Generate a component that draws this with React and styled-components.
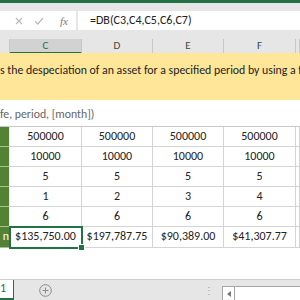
import React from 'react';
import styled, { createGlobalStyle } from 'styled-components';

const Global = createGlobalStyle`
  html, body { margin: 0; padding: 0; }
  body {
    width: 300px;
    height: 300px;
    overflow: hidden;
    font-family: Carlito, Lato, "Liberation Sans", sans-serif;
    background: #fff;
  }
`;

const COLS = '10px 72px 71px 71px 72px 1fr';

const Window = styled.div`
  width: 300px;
  height: 300px;
  display: flex;
  flex-direction: column;
  overflow: hidden;
`;

const TitleStrip = styled.div`
  height: 3px;
  background: #217346;
`;

const FormulaArea = styled.div`
  background: #e6e6e6;
  padding: 8px 0 9px;
  display: flex;
  gap: 2px;
`;

const ButtonsBox = styled.div`
  width: 76px;
  height: 19px;
  background: #fff;
  display: flex;
  align-items: center;
  color: #b5b5b5;
`;

const IconSlot = styled.div`
  width: ${p => p.$w}px;
  height: 19px;
  display: flex;
  align-items: center;
  justify-content: center;
`;

const Fx = styled.span`
  font-family: "Liberation Serif", serif;
  font-style: italic;
  font-size: 11px;
  color: #7a7a7a;
`;

const FormulaInput = styled.div`
  flex: 1;
  height: 19px;
  background: #fff;
  font-size: 12px;
  line-height: 19px;
  color: #222;
  padding-left: 12px;
  white-space: nowrap;
`;

const HeaderRow = styled.div`
  display: grid;
  grid-template-columns: ${COLS};
  height: 14px;
  background: #e6e6e6;
`;

const ColHead = styled.div`
  font-size: 11px;
  line-height: 13px;
  text-align: center;
  color: ${p => (p.$active ? '#217346' : '#444')};
  background: ${p => (p.$active ? '#d2d2d2' : '#e6e6e6')};
  border-right: 1px solid #c8c8c8;
  border-bottom: ${p => (p.$active ? '2px solid #217346' : '1px solid #c8c8c8')};
  box-sizing: border-box;
`;

const Banner = styled.div`
  height: 47px;
  background: #ffe699;
  font-size: 11.8px;
  line-height: 16px;
  padding-top: 9px;
  box-sizing: border-box;
  color: #222;
  white-space: nowrap;
  overflow: hidden;
`;

const Hint = styled.div`
  height: 26px;
  font-size: 11.8px;
  line-height: 16px;
  padding-top: 6px;
  box-sizing: border-box;
  color: #666;
  white-space: nowrap;
  overflow: hidden;
`;

const Table = styled.div`
  border-top: 1px solid #c8c8c8;
`;

const Row = styled.div`
  display: grid;
  grid-template-columns: ${COLS};
  height: ${p => p.$h}px;
`;

const Label = styled.div`
  background: #548235;
  border-right: 1px solid #e8efe3;
  border-bottom: 1px solid #a9c08f;
  box-sizing: border-box;
  color: #fff;
  font-size: 12px;
  line-height: 19px;
  text-align: right;
  overflow: hidden;
  white-space: nowrap;
`;

const Cell = styled.div`
  position: relative;
  font-size: 12px;
  line-height: 19px;
  text-align: center;
  color: #222;
  border-right: 1px solid #d4d4d4;
  border-bottom: 1px solid #d4d4d4;
  box-sizing: border-box;
  white-space: nowrap;
  ${p => p.$selected && `
    outline: 2px solid #217346;
    outline-offset: -1px;
    z-index: 1;
  `}
`;

const Handle = styled.span`
  position: absolute;
  right: -4px;
  bottom: -4px;
  width: 5px;
  height: 5px;
  background: #217346;
  border: 1px solid #fff;
`;

const Blank = styled.div`
  flex: 1;
`;

const TabBar = styled.div`
  height: 21px;
  background: #e6e6e6;
  border-top: 1px solid #cfcfcf;
  box-sizing: border-box;
  display: flex;
  align-items: stretch;
`;

const SheetTab = styled.div`
  width: 14px;
  background: #fff;
  color: #217346;
  font-size: 12px;
  line-height: 17px;
  border-right: 1px solid #217346;
  border-bottom: 2px solid #217346;
  box-sizing: border-box;
  overflow: hidden;
  text-align: right;
  padding-right: 9px;
`;

const AddBtn = styled.div`
  margin-left: 25px;
  display: flex;
  align-items: center;
`;

const Dots = styled.div`
  margin-left: 152px;
  display: flex;
  align-items: center;
  color: #a0a0a0;
  font-size: 10px;
`;

const Scroll = styled.div`
  margin-left: 8px;
  margin-top: 6px;
  flex: 1;
  display: flex;
  background: #fff;
  border-top: 1px solid #a6a6a6;
  border-left: 1px solid #a6a6a6;
`;

const ScrollArrow = styled.div`
  width: 11px;
  border-right: 1px solid #a6a6a6;
  display: flex;
  align-items: center;
  justify-content: center;
`;

const rows = [
  ['', ['500000', '500000', '500000', '500000']],
  ['', ['10000', '10000', '10000', '10000']],
  ['', ['5', '5', '5', '5']],
  ['', ['1', '2', '3', '4']],
  ['', ['6', '6', '6', '6']],
  ['n', ['$135,750.00', '$197,787.75', '$90,389.00', '$41,307.77']],
];

export default function App() {
  const last = rows.length - 1;
  return (
    <Window>
      <Global />
      <TitleStrip />
      <FormulaArea>
        <ButtonsBox>
          <IconSlot $w={12} />
          <IconSlot $w={14}>
            <svg width="8" height="8" viewBox="0 0 8 8">
              <path d="M1 1L7 7M7 1L1 7" stroke="#b8b8b8" strokeWidth="1.1" />
            </svg>
          </IconSlot>
          <IconSlot $w={26}>
            <svg width="10" height="8" viewBox="0 0 10 8">
              <path d="M1 4.2L3.8 7L9 1" stroke="#b8b8b8" strokeWidth="1.2" fill="none" />
            </svg>
          </IconSlot>
          <IconSlot $w={24}>
            <Fx>fx</Fx>
          </IconSlot>
        </ButtonsBox>
        <FormulaInput>=DB(C3,C4,C5,C6,C7)</FormulaInput>
      </FormulaArea>
      <HeaderRow>
        <ColHead />
        <ColHead $active>C</ColHead>
        <ColHead>D</ColHead>
        <ColHead>E</ColHead>
        <ColHead>F</ColHead>
        <ColHead />
      </HeaderRow>
      <Banner>s the despeciation of an asset for a specified period by using a f</Banner>
      <Hint>fe, period, [month])</Hint>
      <Table>
        {rows.map(([label, vals], i) => (
          <Row key={i} $h={i === last ? 21 : 20}>
            <Label>{label}</Label>
            {vals.map((v, j) => (
              <Cell key={j} $selected={i === last && j === 0}>
                {v}
                {i === last && j === 0 && <Handle />}
              </Cell>
            ))}
            <Cell />
          </Row>
        ))}
      </Table>
      <Blank />
      <TabBar>
        <SheetTab>1</SheetTab>
        <AddBtn>
          <svg width="13" height="13" viewBox="0 0 13 13">
            <circle cx="6.5" cy="6.5" r="5.8" fill="none" stroke="#8a8a8a" strokeWidth="1" />
            <path d="M6.5 3.5V9.5M3.5 6.5H9.5" stroke="#8a8a8a" strokeWidth="1" />
          </svg>
        </AddBtn>
        <Dots>⋮</Dots>
        <Scroll>
          <ScrollArrow>
            <svg width="4" height="6" viewBox="0 0 4 6">
              <path d="M4 0L0 3L4 6Z" fill="#777" />
            </svg>
          </ScrollArrow>
        </Scroll>
      </TabBar>
    </Window>
  );
}
